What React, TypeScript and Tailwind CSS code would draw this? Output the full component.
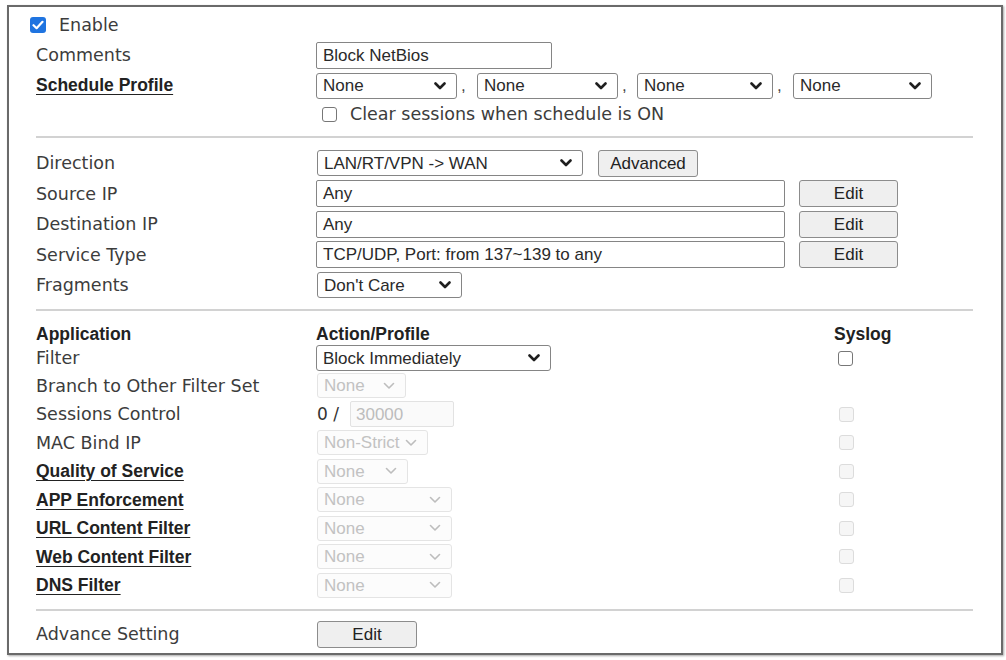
import type { ReactNode } from "react";

const SANS = "font-['DejaVu_Sans',Verdana,sans-serif]";
const ARIAL = "font-['Liberation_Sans',Arial,sans-serif]";

function Chevron({ disabled }: { disabled?: boolean }) {
  return (
    <svg width="12" height="8" viewBox="0 0 12 8" className="shrink-0">
      <path
        d="M1.5 1.5 L6 6 L10.5 1.5"
        fill="none"
        stroke={disabled ? "#bdbdbd" : "#1f1f1f"}
        strokeWidth={disabled ? 1.6 : 2.6}
        strokeLinecap="round"
        strokeLinejoin="round"
      />
    </svg>
  );
}

function Select({ value, className = "" }: { value: string; className?: string }) {
  return (
    <div
      className={`flex h-[26px] shrink-0 items-center justify-between rounded-[3px] border border-[#858585] bg-white pl-[6px] pr-[10px] text-[17px] text-[#2a2a2a] ${ARIAL} ${className}`}
    >
      <span className="leading-none">{value}</span>
      <Chevron />
    </div>
  );
}

function DisabledSelect({ value, className = "" }: { value: string; className?: string }) {
  return (
    <div
      className={`flex h-[25px] shrink-0 items-center justify-between rounded-[3px] border border-[#e4e4e4] bg-[#fcfcfc] pl-[6px] pr-[10px] text-[17px] text-[#c2c2c2] ${ARIAL} ${className}`}
    >
      <span className="leading-none">{value}</span>
      <Chevron disabled />
    </div>
  );
}

function TextBox({ value, className = "" }: { value: string; className?: string }) {
  return (
    <div
      className={`flex h-[27px] shrink-0 items-center rounded-[2px] border border-[#858585] bg-white px-[6px] text-[17px] text-[#2a2a2a] ${ARIAL} ${className}`}
    >
      {value}
    </div>
  );
}

function Button({ label, className = "" }: { label: string; className?: string }) {
  return (
    <button
      type="button"
      className={`flex h-[27px] shrink-0 items-center justify-center rounded-[3px] border border-[#8c8c8c] bg-[#efefef] text-[17px] text-[#222] ${ARIAL} ${className}`}
    >
      {label}
    </button>
  );
}

function Check({ checked, disabled }: { checked?: boolean; disabled?: boolean }) {
  if (checked) {
    return (
      <span className="flex h-[16px] w-[16px] shrink-0 items-center justify-center rounded-[3px] bg-[#1f74e0]">
        <svg width="12" height="10" viewBox="0 0 12 10">
          <path d="M1.5 5.2 L4.6 8.2 L10.5 1.8" fill="none" stroke="#fff" strokeWidth="2.2" strokeLinecap="round" strokeLinejoin="round" />
        </svg>
      </span>
    );
  }
  return (
    <span
      className={`block h-[15px] w-[15px] shrink-0 rounded-[3px] border ${
        disabled ? "border-[#dcdcdc] bg-[#f6f6f6]" : "border-[#777] bg-white"
      }`}
    />
  );
}

function Label({ children, bold }: { children: ReactNode; bold?: boolean }) {
  if (bold) {
    return (
      <span className={`text-[17.5px] font-bold text-[#222] underline underline-offset-[3px] ${ARIAL}`}>
        {children}
      </span>
    );
  }
  return <span className={`text-[17.5px] text-[#3c3c3c] ${SANS}`}>{children}</span>;
}

function Divider({ className = "" }: { className?: string }) {
  return <div className={`h-[2px] w-[937px] bg-[#d2d2d2] ${className}`} />;
}

function Comma({ className = "w-[20px]" }: { className?: string }) {
  return (
    <span className={`shrink-0 self-end pb-[2px] pl-[4px] text-[17px] text-[#444] ${ARIAL} ${className}`}>,</span>
  );
}

type AppRow = {
  label: string;
  bold?: boolean;
  control: ReactNode;
  syslog?: boolean;
};

const APP_ROWS: AppRow[] = [
  { label: "Branch to Other Filter Set", control: <DisabledSelect value="None" className="w-[89px]" /> },
  {
    label: "Sessions Control",
    syslog: true,
    control: (
      <div className="flex items-center">
        <span className={`w-[33px] text-[17px] text-[#333] ${SANS}`}>0 /</span>
        <div
          className={`flex h-[26px] w-[104px] items-center rounded-[2px] border border-[#e2e2e2] bg-[#fafafa] px-[5px] text-[17px] text-[#bdbdbd] ${ARIAL}`}
        >
          30000
        </div>
      </div>
    ),
  },
  { label: "MAC Bind IP", syslog: true, control: <DisabledSelect value="Non-Strict" className="w-[111px] pr-[5px]" /> },
  { label: "Quality of Service", bold: true, syslog: true, control: <DisabledSelect value="None" className="w-[91px]" /> },
  { label: "APP Enforcement", bold: true, syslog: true, control: <DisabledSelect value="None" className="w-[135px]" /> },
  { label: "URL Content Filter", bold: true, syslog: true, control: <DisabledSelect value="None" className="w-[135px]" /> },
  { label: "Web Content Filter", bold: true, syslog: true, control: <DisabledSelect value="None" className="w-[135px]" /> },
  { label: "DNS Filter", bold: true, syslog: true, control: <DisabledSelect value="None" className="w-[135px]" /> },
];

const ADDRESS_ROWS = [
  { label: "Source IP", value: "Any" },
  { label: "Destination IP", value: "Any" },
  { label: "Service Type", value: "TCP/UDP, Port: from 137~139 to any" },
];

export default function App() {
  return (
    <div className="h-[660px] w-[1006px] overflow-hidden bg-white">
      <div className="ml-[7px] mt-[5px] flex h-[650px] w-[996px] flex-col border-2 border-[#6a6a6a] pl-[27px] pt-[3px] shadow-[1px_1px_2px_rgba(0,0,0,0.35)]">
        {/* general */}
        <div className="flex h-[30px] items-center">
          <span className="-ml-[6px] mr-[13px]">
            <Check checked />
          </span>
          <Label>Enable</Label>
        </div>
        <div className="flex h-[31px] items-center">
          <div className="w-[280px] shrink-0">
            <Label>Comments</Label>
          </div>
          <TextBox value="Block NetBios" className="w-[236px]" />
        </div>
        <div className="flex h-[29px] items-center">
          <div className="w-[280px] shrink-0">
            <Label bold>Schedule Profile</Label>
          </div>
          <Select value="None" className="w-[141px]" />
          <Comma />
          <Select value="None" className="w-[141px]" />
          <Comma className="w-[19px]" />
          <Select value="None" className="w-[136px]" />
          <Comma />
          <Select value="None" className="w-[139px]" />
        </div>
        <div className="flex h-[28px] items-center pl-[286px]">
          <Check />
          <span className="ml-[13px]">
            <Label>Clear sessions when schedule is ON</Label>
          </span>
        </div>

        <Divider className="mt-[8px]" />

        {/* direction / addresses */}
        <div className="mt-[10px] flex h-[30.5px] items-center">
          <div className="w-[280px] shrink-0">
            <Label>Direction</Label>
          </div>
          <Select value="LAN/RT/VPN -> WAN" className="ml-[1px] w-[266px]" />
          <Button label="Advanced" className="ml-[15px] w-[100px]" />
        </div>
        {ADDRESS_ROWS.map((row) => (
          <div key={row.label} className="flex h-[30.5px] items-center">
            <div className="w-[280px] shrink-0">
              <Label>{row.label}</Label>
            </div>
            <TextBox value={row.value} className="w-[469px]" />
            <Button label="Edit" className="ml-[14px] w-[99px]" />
          </div>
        ))}
        <div className="flex h-[30.5px] items-center">
          <div className="w-[280px] shrink-0">
            <Label>Fragments</Label>
          </div>
          <Select value="Don't Care" className="ml-[1px] w-[145px]" />
        </div>

        <Divider className="mt-[8px]" />

        {/* application */}
        <div className="mt-[14px] flex h-[20px] items-center">
          <div className={`w-[280px] shrink-0 text-[17.5px] font-bold text-[#222] ${ARIAL}`}>Application</div>
          <div className={`w-[518px] shrink-0 text-[17.5px] font-bold text-[#222] ${ARIAL}`}>Action/Profile</div>
          <div className={`text-[17.5px] font-bold text-[#222] ${ARIAL}`}>Syslog</div>
        </div>
        <div className="flex h-[27px] items-center">
          <div className="w-[280px] shrink-0">
            <Label>Filter</Label>
          </div>
          <div className="w-[518px] shrink-0">
            <Select value="Block Immediately" className="w-[235px]" />
          </div>
          <span className="ml-[4px]">
            <Check />
          </span>
        </div>
        {APP_ROWS.map((row) => (
          <div key={row.label} className="flex h-[28.5px] items-center">
            <div className="w-[281px] shrink-0">
              <Label bold={row.bold}>{row.label}</Label>
            </div>
            <div className="w-[517px] shrink-0">{row.control}</div>
            {row.syslog && (
              <span className="ml-[5px]">
                <Check disabled />
              </span>
            )}
          </div>
        ))}

        <Divider className="mt-[9px]" />

        <div className="mt-[10px] flex h-[28px] items-center">
          <div className="w-[281px] shrink-0">
            <Label>Advance Setting</Label>
          </div>
          <Button label="Edit" className="w-[100px]" />
        </div>
      </div>
    </div>
  );
}
